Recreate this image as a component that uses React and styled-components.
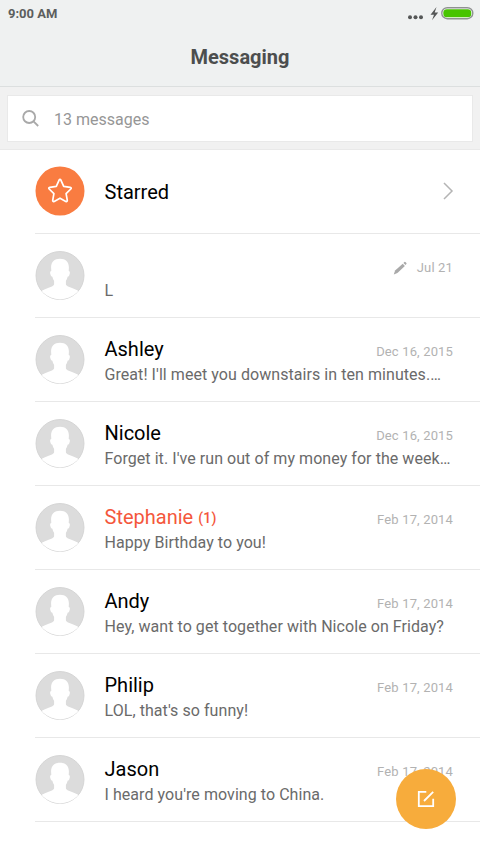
import React from 'react';
import styled, { createGlobalStyle, css } from 'styled-components';

const GlobalStyle = createGlobalStyle`
  * {
    box-sizing: border-box;
  }
  body {
    margin: 0;
    background: #fff;
    font-family: Roboto, sans-serif;
  }
`;

const Screen = styled.div`
  position: relative;
  width: 480px;
  height: 853px;
  overflow: hidden;
  background: #fff;
`;

const Header = styled.header`
  height: 87px;
  background: #eff1f1;
  border-bottom: 1px solid #dcdfdf;
`;

const StatusBar = styled.div`
  display: flex;
  align-items: center;
  justify-content: space-between;
  height: 28px;
  padding: 0 6px 0 8px;
  color: #5c5e5e;
  font-size: 13px;
  font-weight: 700;
  svg {
    display: block;
  }
`;

const Clock = styled.span`
  margin-top: -1px;
`;

const Title = styled.h1`
  margin: 0;
  height: 58px;
  line-height: 59px;
  font-size: 20px;
  font-weight: 700;
  text-align: center;
  color: #4c4e4e;
`;

const SearchArea = styled.div`
  height: 63px;
  padding: 8px 7px 7px;
  background: #f1f1f1;
  border-bottom: 1px solid #e9e9e9;
`;

const SearchBox = styled.div`
  display: flex;
  align-items: center;
  gap: 14px;
  height: 47px;
  padding: 1px 0 0 14px;
  border: 1px solid #e9e9e9;
  background: #fff;
  color: #969696;
  font-size: 16px;
`;

const List = styled.ul`
  list-style: none;
  margin: 0;
  padding: 0 0 0 35px;
`;

const Row = styled.li`
  display: flex;
  height: 84px;
  padding: 17px 27px 0 0;
  border-bottom: 1px solid #e8e8e8;
  ${(props) =>
    props.$starred &&
    css`
      padding-top: 16px;
    `}
`;

const Avatar = styled.svg`
  flex: none;
  width: 50px;
  height: 50px;
  margin-right: 19.5px;
`;

const Body = styled.div`
  flex: 1;
  min-width: 0;
`;

const TopLine = styled.div`
  display: flex;
  align-items: center;
  justify-content: space-between;
  height: 29px;
`;

const Name = styled.span`
  margin-top: -2px;
  font-size: 20px;
  color: ${(props) => (props.$unread ? '#f4573c' : '#000')};
  small {
    margin-left: 5px;
    font-size: 14px;
    font-weight: 500;
    letter-spacing: 0.2px;
    vertical-align: 1px;
  }
`;

const StarredLabel = styled.span`
  flex: 1;
  height: 50px;
  line-height: 53px;
  font-size: 20px;
`;

const When = styled.span`
  display: flex;
  align-items: center;
  gap: 9px;
  padding-top: 4px;
  font-size: 13px;
  letter-spacing: 0.15px;
  color: #b2b2b2;
`;

const Snippet = styled.p`
  margin: 0;
  line-height: 22px;
  font-size: 16px;
  letter-spacing: 0.06px;
  color: #6a6a6a;
  white-space: nowrap;
`;

const Chevron = styled.svg`
  width: 12px;
  height: 18px;
  margin: 16px -1px 0 0;
`;

const ComposeButton = styled.button`
  position: absolute;
  right: 24px;
  bottom: 24px;
  display: grid;
  place-items: center;
  width: 60px;
  height: 60px;
  padding: 0;
  border: 0;
  border-radius: 50%;
  background: #f7ac3c;
`;

const threads = [
  { name: '', date: 'Jul 21', text: 'L', draft: true },
  {
    name: 'Ashley',
    date: 'Dec 16, 2015',
    text: "Great! I'll meet you downstairs in ten minutes.…",
  },
  {
    name: 'Nicole',
    date: 'Dec 16, 2015',
    text: "Forget it. I've run out of my money for the week…",
  },
  {
    name: 'Stephanie',
    date: 'Feb 17, 2014',
    text: 'Happy Birthday to you!',
    unread: 1,
  },
  {
    name: 'Andy',
    date: 'Feb 17, 2014',
    text: 'Hey, want to get together with Nicole on Friday?',
  },
  { name: 'Philip', date: 'Feb 17, 2014', text: "LOL, that's so funny!" },
  {
    name: 'Jason',
    date: 'Feb 17, 2014',
    text: "I heard you're moving to China.",
  },
];

const StatusIcons = () => (
  <svg width="68" height="28" viewBox="0 0 68 28">
    <g fill="#555757">
      <circle cx="4" cy="17.2" r="2" />
      <circle cx="9.5" cy="17.2" r="2" />
      <circle cx="15" cy="17.2" r="2" />
      <path d="M30.5 7 24.5 14.8H28L26 20.3 32.2 12.4H28.7Z" />
    </g>
    <rect x="35.8" y="7.7" width="31" height="11" rx="5.5" fill="#fff" stroke="#8f9191" strokeWidth="1.4" />
    <rect x="37.3" y="9.2" width="28" height="8" rx="3.5" fill="#48c400" />
  </svg>
);

const SearchIcon = () => (
  <svg width="18" height="18" viewBox="0 0 18 18" fill="none" stroke="#a9a9a9" strokeWidth="1.8">
    <circle cx="7.2" cy="7" r="6" />
    <path d="m11.5 11.3 4.7 4.7" />
  </svg>
);

const PencilIcon = () => (
  <svg width="15" height="14" viewBox="0 0 15 14" fill="#a9a9a9">
    <path d="m.8 13.5 1.300-3.900L9.700 2.700l2.200 2.200-7.500 7Z" />
    <path d="m10.400 2 1-1q.5-.4 1 .1l1 1q.4.5 0 1l-.9.9Z" />
  </svg>
);

const Person = () => (
  <Avatar viewBox="0 0 50 50">
    <clipPath id="face">
      <circle cx="25" cy="24.5" r="23.9" />
    </clipPath>
    <circle cx="25" cy="24.5" r="24" fill="#dcdcdc" stroke="#d2d2d2" strokeWidth="0.9" />
    <path
      clipPath="url(#face)"
      fill="#fff"
      d="M25 7.700c5.800 0 9.100 3.600 8.900 9l-.2 3.400c1.500.2 1.300 2 .8 3.500-.4 1.500-1 2.200-1.900 2.200-.4 1.800-.9 2.900-1.700 4v3.500c.1 1.100 1.200 1.700 2.800 2.400 4.600 1.900 8.500 3.200 11.300 5.200V50H5V40.900c2.800-2 6.700-3.300 11.300-5.200 1.600-.7 2.700-1.300 2.800-2.400v-3.500c-.8-1.100-1.300-2.200-1.700-4-.9 0-1.500-.7-1.900-2.200-.5-1.500-.7-3.300.8-3.500l-.2-3.400C15.900 11.300 19.200 7.700 25 7.700Z"
    />
  </Avatar>
);

const Star = () => (
  <Avatar viewBox="0 0 50 50">
    <circle cx="25" cy="25" r="24.5" fill="#f97c41" />
    <path
      fill="none"
      stroke="#fff"
      strokeWidth="1.7"
      strokeLinejoin="round"
      d="M24 14.300q1-1.700 2 0l2.700 6.100 6.500.9q1.700.4.600 1.700l-4.700 4.700 1.200 6.600q.1 1.700-1.500 1.100L25 32.200l-5.800 3.200q-1.600.6-1.500-1.100l1.200-6.600-4.700-4.700q-1.100-1.300.6-1.700l6.500-.9Z"
    />
  </Avatar>
);

const Thread = ({ name, date, text, draft, unread }) => (
  <Row>
    <Person />
    <Body>
      <TopLine>
        <Name $unread={unread}>
          {name}
          {unread && <small>({unread})</small>}
        </Name>
        <When>
          {draft && <PencilIcon />}
          {date}
        </When>
      </TopLine>
      <Snippet>{text}</Snippet>
    </Body>
  </Row>
);

export default function App() {
  return (
    <Screen>
      <GlobalStyle />
      <Header>
        <StatusBar>
          <Clock>9:00 AM</Clock>
          <StatusIcons />
        </StatusBar>
        <Title>Messaging</Title>
      </Header>
      <SearchArea>
        <SearchBox>
          <SearchIcon />
          13 messages
        </SearchBox>
      </SearchArea>
      <List>
        <Row $starred>
          <Star />
          <StarredLabel>Starred</StarredLabel>
          <Chevron viewBox="0 0 12 18" fill="none" stroke="#b4b4b4" strokeWidth="1.5">
            <path d="m2 1 8 8-8 8" />
          </Chevron>
        </Row>
        {threads.map((thread) => (
          <Thread key={thread.name} {...thread} />
        ))}
      </List>
      <ComposeButton aria-label="New message">
        <svg width="18" height="18" viewBox="0 0 18 18" fill="none" stroke="#fff" strokeWidth="1.8">
          <path d="M9.300 1.900H1.800v14.200h14.400V8.800M7 11l9.200-9.200" />
        </svg>
      </ComposeButton>
    </Screen>
  );
}
